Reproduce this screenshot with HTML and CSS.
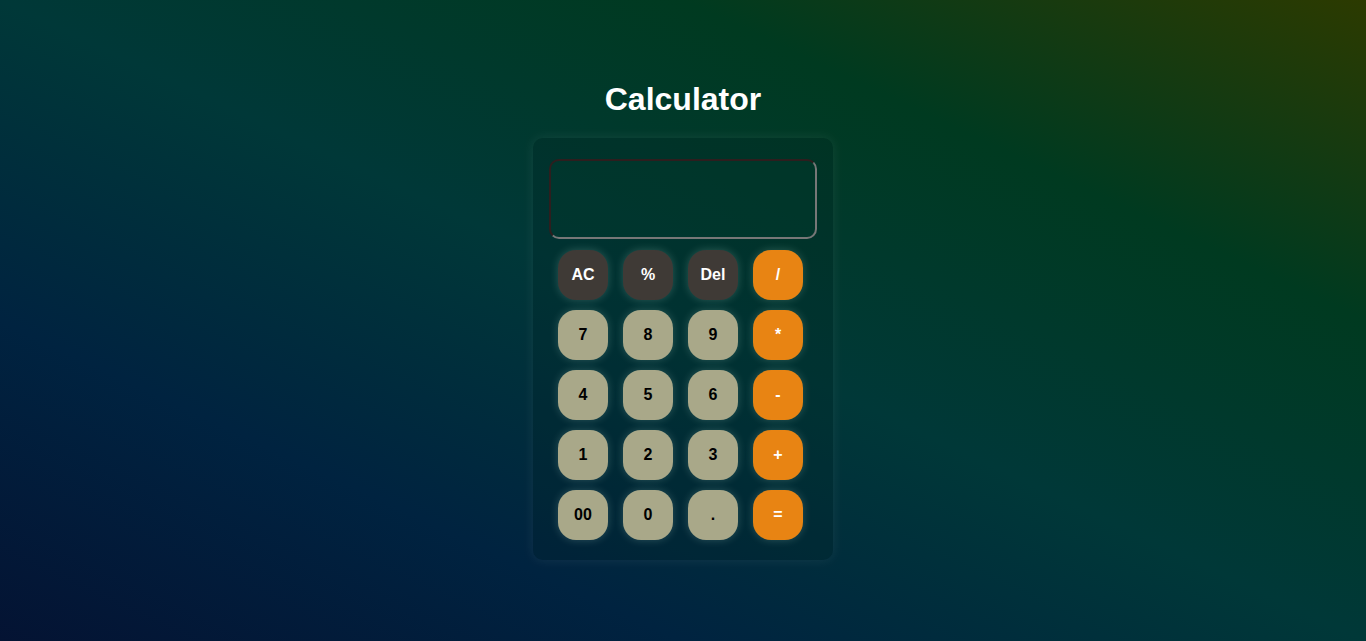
FILE: index.html
```html
<!DOCTYPE html>
<html lang="en">
<head>
<meta charset="UTF-8">
<title>Calculator</title>
<link rel="stylesheet" href="styles.css">
</head>
<body>
<main class="page">
  <h1 class="title">Calculator</h1>
  <div class="calc">
    <input class="display" type="text" readonly>
    <div class="keys">
      <button class="key dark">AC</button>
      <button class="key dark">%</button>
      <button class="key dark">Del</button>
      <button class="key op">/</button>
      <button class="key">7</button>
      <button class="key">8</button>
      <button class="key">9</button>
      <button class="key op">*</button>
      <button class="key">4</button>
      <button class="key">5</button>
      <button class="key">6</button>
      <button class="key op">-</button>
      <button class="key">1</button>
      <button class="key">2</button>
      <button class="key">3</button>
      <button class="key op">+</button>
      <button class="key">00</button>
      <button class="key">0</button>
      <button class="key">.</button>
      <button class="key op">=</button>
    </div>
  </div>
</main>
</body>
</html>
```

FILE: styles.css
```css
html, body {
  margin: 0;
  height: 100%;
}
body {
  font-family: "Liberation Sans", Arial, sans-serif;
  background: linear-gradient(to top right, #041333 0%, #002340 25%, #003838 50%, #003a20 75%, #2c3a00 100%);
  overflow: hidden;
}
.page {
  display: flex;
  flex-direction: column;
  align-items: center;
  padding-top: 81px;
}
.title {
  margin: 0 0 20px;
  font-size: 32px;
  line-height: 37px;
  font-weight: bold;
  color: #ffffff;
}
.calc {
  width: 300px;
  box-sizing: border-box;
  padding: 21px 15px 20px 16px;
  border-radius: 10px;
  background: rgba(0, 30, 30, 0.22);
  box-shadow: 0 0 12px rgba(255, 255, 255, 0.08);
}
.display {
  display: block;
  width: 268px;
  height: 80px;
  box-sizing: border-box;
  margin: 0 0 11px;
  border: 2px solid #777;
  border-top-color: #2e1e1e;
  border-left-color: #2e1e1e;
  border-radius: 10px;
  background: rgba(0, 60, 45, 0.35);
  color: #fff;
  font-size: 24px;
  text-align: right;
  padding: 0 10px;
  outline: none;
}
.keys {
  display: grid;
  grid-template-columns: repeat(4, 50px);
  column-gap: 15px;
  row-gap: 10px;
  padding-left: 9px;
}
.key {
  width: 50px;
  height: 50px;
  border: none;
  border-radius: 18px;
  background: #a9a889;
  color: #000;
  font-family: "Liberation Sans", Arial, sans-serif;
  font-size: 16px;
  font-weight: bold;
  padding: 0;
  box-shadow: 0 0 8px rgba(210, 255, 240, 0.2);
}
.key.dark {
  background: #3f3a36;
  color: #fff;
}
.key.op {
  background: #e88413;
  color: #fff;
}
```
